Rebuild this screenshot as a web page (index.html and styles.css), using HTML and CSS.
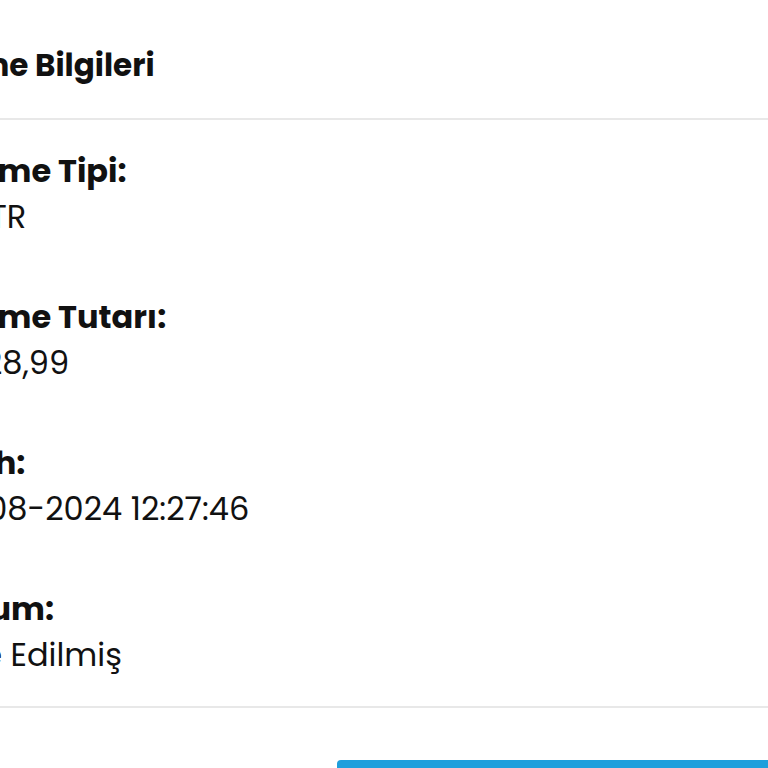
FILE: index.html
```html
<!DOCTYPE html>
<html lang="tr">
<head>
  <meta charset="UTF-8">
  <title>Ödeme Bilgileri</title>
  <link rel="stylesheet" href="styles.css">
</head>
<body>
  <div class="card">
    <div class="card-header">
      <h2>Ödeme Bilgileri</h2>
    </div>

    <div class="card-body">
      <div class="info-row">
        <div class="info-label">Ödeme Tipi:</div>
        <div class="info-value">EFT TR</div>
      </div>
      <div class="info-row">
        <div class="info-label">Ödeme Tutarı:</div>
        <div class="info-value">€ 228,99</div>
      </div>
      <div class="info-row">
        <div class="info-label">Tarih:</div>
        <div class="info-value">28-08-2024 12:27:46</div>
      </div>
      <div class="info-row">
        <div class="info-label">Durum:</div>
        <div class="info-value">İade Edilmiş</div>
      </div>
    </div>

    <div class="card-footer">
      <button class="btn-primary">Faturayı İndir</button>
    </div>
  </div>
</body>
</html>
```

FILE: styles.css
```css
html, body {
  margin: 0;
  padding: 0;
  background: #ffffff;
  overflow: hidden;
}

body {
  font-family: 'Poppins', 'Inter', sans-serif;
  color: #111111;
}

.card {
  margin-left: -69px;
  width: 900px;
}

.card-header {
  padding: 40px 0 28px 0;
  border-bottom: 2px solid #e8e8e8;
}

.card-header h2 {
  margin: 0 0 0 -19px;
  font-size: 31px;
  line-height: 50px;
  font-weight: 700;
}

.card-body {
  padding: 28px 0 28px 0;
  border-bottom: 2px solid #e8e8e8;
}

.info-row {
  margin-bottom: 54px;
}

.info-row:last-child {
  margin-bottom: 0;
}

.info-label {
  font-size: 32px;
  line-height: 46px;
  font-weight: 700;
}

.info-value {
  font-size: 32px;
  line-height: 46px;
  font-weight: 400;
}

.card-footer {
  padding: 52px 0 20px 406px;
}

.btn-primary {
  width: 480px;
  height: 60px;
  border: none;
  border-radius: 4px;
  background-color: #1e9fdc;
  color: #ffffff;
  font-family: inherit;
  font-size: 24px;
  cursor: pointer;
}
```
